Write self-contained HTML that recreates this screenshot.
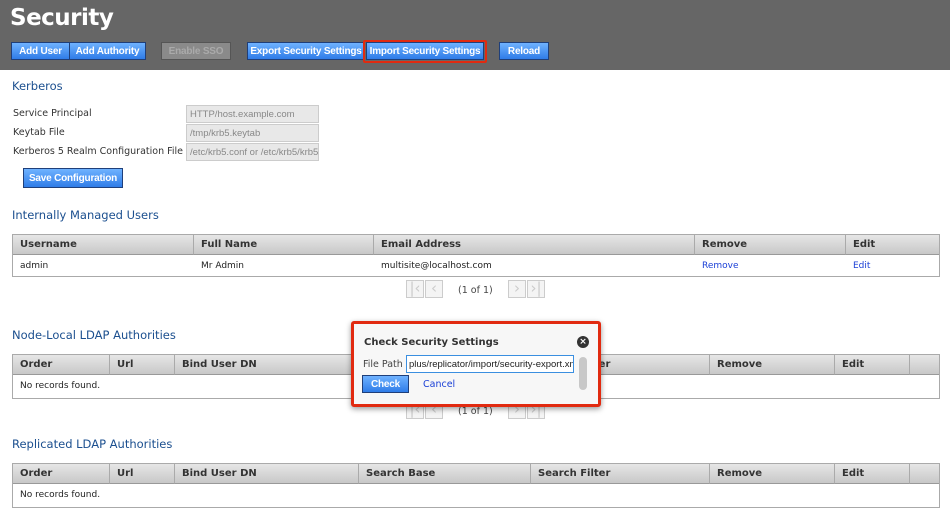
<!DOCTYPE html><html><head><style>
*{box-sizing:border-box;margin:0;padding:0}
body{width:950px;height:518px;background:#fff;font-family:"DejaVu Sans","Liberation Sans",sans-serif;position:relative;overflow:hidden;font-size:10px;color:#222}
.a{position:absolute}
.hdr{left:0;top:0;width:950px;height:70px;background:#666}
.title{left:10px;top:5px;color:#fff;font:bold 23px "DejaVu Sans",sans-serif;letter-spacing:-0.5px}
.btn{position:absolute;height:18px;background:linear-gradient(#6fb2ff,#2f7ce8);border:1px solid #1f3f7a;color:#fff;font:bold 10px "Liberation Sans",sans-serif;letter-spacing:-0.2px;text-align:center;line-height:18px}
.dis{background:#8a8a8a;border-color:#555;color:#aaa}
.h{color:#1b4f8f;font-size:11.5px;left:12px}
.lbl{left:13px;font-size:9.5px;color:#333}
.in{left:186px;width:133px;height:18px;background:#e8e8e8;border:1px solid #ccc;color:#888;font:9.5px "Liberation Sans",sans-serif;padding:3px 3px;overflow:hidden;white-space:nowrap}
.tbl{left:12px;width:928px;border:1px solid #aaa}
.th{position:absolute;top:0;height:20px;background:linear-gradient(#e6e6e6,#c8c8c8);border-right:1px solid #aaa;font-weight:bold;font-size:10px;padding:4px 7px;color:#333;border-bottom:1px solid #999}
.td{position:absolute;font-size:9px;padding-left:7px;color:#222}
.lnk{color:#1a3fd6}
.pg{position:absolute;width:18px;height:18px;border:1px solid #ccc;background:#f4f4f4;color:#ccc;text-align:center;font-size:15px;line-height:15px}
.pt{position:absolute;font-size:9.5px;color:#444}
</style></head><body>
<div class="a hdr"></div>
<div class="a title">Security</div>
<div class="btn" style="left:11px;top:42px;width:59px">Add User</div>
<div class="btn" style="left:69px;top:42px;width:77px">Add Authority</div>
<div class="btn dis" style="left:161px;top:42px;width:70px">Enable SSO</div>
<div class="btn" style="left:247px;top:42px;width:118px">Export Security Settings</div>
<div class="a" style="left:363px;top:40px;width:124px;height:23px;border:2px solid #e12a10;border-radius:2px"></div>
<div class="btn" style="left:366px;top:42px;width:118px">Import Security Settings</div>
<div class="btn" style="left:499px;top:42px;width:50px">Reload</div>

<div class="a h" style="top:79px">Kerberos</div>
<div class="a lbl" style="top:108px">Service Principal</div>
<div class="a lbl" style="top:127px">Keytab File</div>
<div class="a lbl" style="top:146px">Kerberos 5 Realm Configuration File</div>
<div class="a in" style="top:105px">HTTP/host.example.com</div>
<div class="a in" style="top:124px">/tmp/krb5.keytab</div>
<div class="a in" style="top:143px">/etc/krb5.conf or /etc/krb5/krb5.conf</div>
<div class="btn" style="left:23px;top:168px;width:100px;height:20px;line-height:20px">Save Configuration</div>

<div class="a h" style="top:208px">Internally Managed Users</div>
<div class="a tbl" style="top:234px;height:43px">
<div class="th" style="left:0;width:181px">Username</div>
<div class="th" style="left:181px;width:180px">Full Name</div>
<div class="th" style="left:361px;width:321px">Email Address</div>
<div class="th" style="left:682px;width:151px">Remove</div>
<div class="th" style="left:833px;width:93px;border-right:0">Edit</div>
<div class="td" style="left:0;top:26px">admin</div>
<div class="td" style="left:181px;top:26px">Mr Admin</div>
<div class="td" style="left:361px;top:26px">multisite@localhost.com</div>
<div class="td lnk" style="left:682px;top:26px">Remove</div>
<div class="td lnk" style="left:833px;top:26px">Edit</div>
</div>
<div class="pg" style="left:406px;top:280px">|‹</div><div class="pg" style="left:425px;top:280px">‹</div>
<div class="pt" style="left:458px;top:285px">(1 of 1)</div>
<div class="pg" style="left:508px;top:280px">›</div><div class="pg" style="left:527px;top:280px">›|</div>

<div class="a h" style="top:328px">Node-Local LDAP Authorities</div>
<div class="a tbl" style="top:354px;height:45px">
<div class="th" style="left:0;width:97px">Order</div><div class="th" style="left:97px;width:65px">Url</div><div class="th" style="left:162px;width:184px">Bind User DN</div><div class="th" style="left:346px;width:172px">Search Base</div><div class="th" style="left:518px;width:179px">Search Filter</div><div class="th" style="left:697px;width:125px">Remove</div><div class="th" style="left:822px;width:75px">Edit</div><div class="th" style="left:897px;width:29px;border-right:0"></div>
<div class="td" style="left:0;top:26px">No records found.</div>
</div>
<div class="pg" style="left:406px;top:401px">|‹</div><div class="pg" style="left:425px;top:401px">‹</div>
<div class="pt" style="left:458px;top:406px">(1 of 1)</div>
<div class="pg" style="left:508px;top:401px">›</div><div class="pg" style="left:527px;top:401px">›|</div>

<div class="a h" style="top:437px">Replicated LDAP Authorities</div>
<div class="a tbl" style="top:463px;height:45px">
<div class="th" style="left:0;width:97px">Order</div><div class="th" style="left:97px;width:65px">Url</div><div class="th" style="left:162px;width:184px">Bind User DN</div><div class="th" style="left:346px;width:172px">Search Base</div><div class="th" style="left:518px;width:179px">Search Filter</div><div class="th" style="left:697px;width:125px">Remove</div><div class="th" style="left:822px;width:75px">Edit</div><div class="th" style="left:897px;width:29px;border-right:0"></div>
<div class="td" style="left:0;top:26px">No records found.</div>
</div>

<div class="a" style="left:351px;top:321px;width:250px;height:86px;border:3px solid #e12a10;border-radius:3px;background:#f7f7f7;box-shadow:0 2px 6px rgba(0,0,0,.4)"></div>
<div class="a" style="left:364px;top:337px;font-weight:bold;font-size:10px;color:#333">Check Security Settings</div>
<div class="a" style="left:577px;top:336px;width:12px;height:12px;border-radius:50%;background:#333;color:#fff;font-size:9px;line-height:12px;text-align:center;font-weight:bold">×</div>
<div class="a" style="left:363px;top:359px;font-size:9.5px;color:#444">File Path</div>
<div class="a" style="left:406px;top:355px;width:168px;height:18px;border:1px solid #3b8fe0;background:#fff;font:9.5px 'Liberation Sans',sans-serif;padding:3px 2px;white-space:nowrap;overflow:hidden;color:#222">plus/replicator/import/security-export.xml</div>
<div class="a" style="left:579px;top:357px;width:8px;height:33px;border-radius:4px;background:#c8c8c8"></div>
<div class="btn" style="left:362px;top:375px;width:47px;height:18px">Check</div>
<div class="a lnk" style="left:423px;top:379px;font-size:9.5px">Cancel</div>
</body></html>
